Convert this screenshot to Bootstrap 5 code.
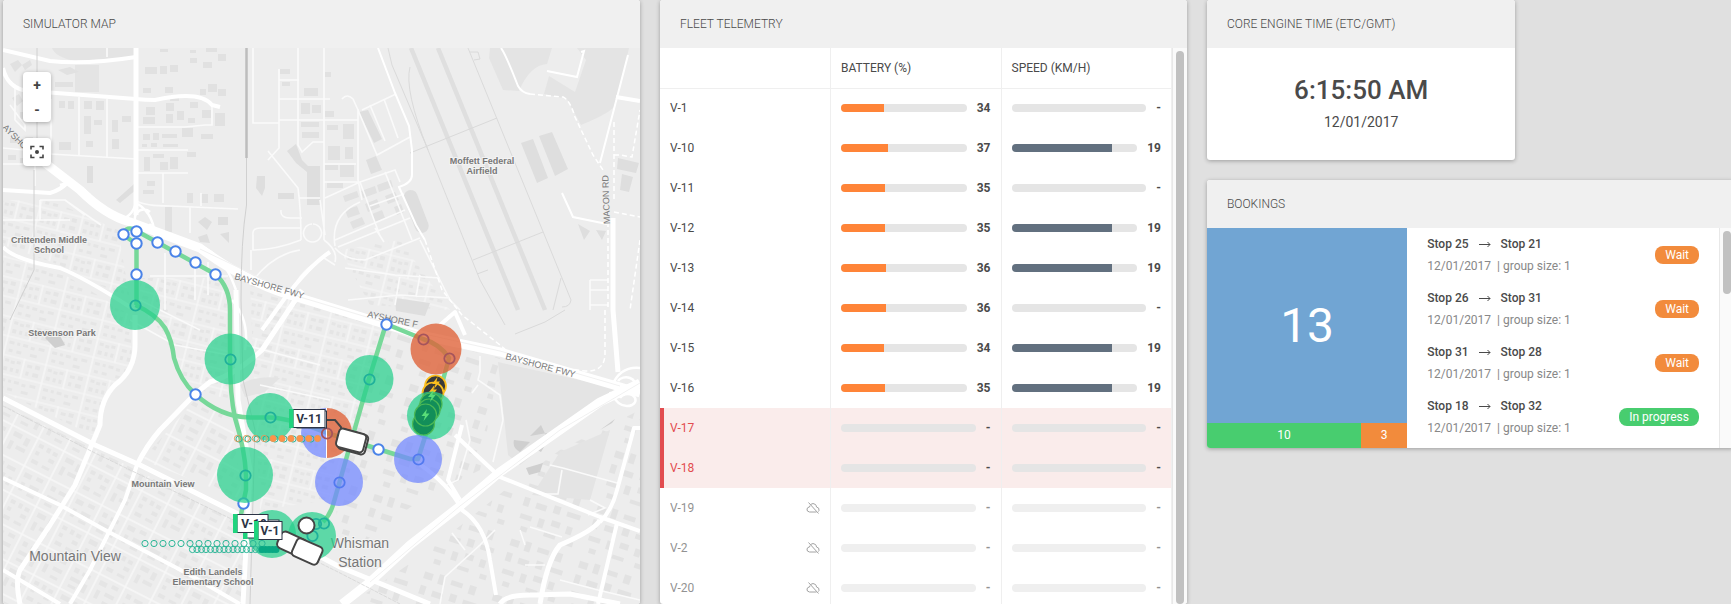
<!DOCTYPE html>
<html lang="en">
<head>
<meta charset="utf-8">
<meta name="viewport" content="width=device-width, initial-scale=1">
<title>Fleet simulator</title>
<link href="https://cdn.jsdelivr.net/npm/bootstrap@5.3.0/dist/css/bootstrap.min.css" rel="stylesheet">
<style>
body{background:#e0e0e0;font-family:Roboto,sans-serif;font-size:12px;line-height:20px;color:#4a4a4a;overflow:hidden}
.board{display:grid;grid-template-columns:637fr 527fr 527fr;column-gap:20px;margin-left:3px;margin-right:-3px;height:100vh}
.panel{border:0;border-radius:3px;box-shadow:0 1px 4px rgba(0,0,0,.3);min-width:0;min-height:0;overflow:hidden;color:#4a4a4a}
.panel-title{background:#f0f0f0;height:48px;padding:14px 20px;font-size:12px;font-weight:300;line-height:20px;margin:0;text-transform:uppercase;flex:none}
.map-body{min-height:0;position:relative;background:#ededed}
.map-tools{position:absolute;left:20px;top:24px}
.tool-box{background:#fff;border-radius:4px;box-shadow:0 1px 4px rgba(0,0,0,.3);width:28px;overflow:hidden}
.tool-box button{display:flex;align-items:center;justify-content:center;border:0;background:none;padding:0;width:28px;color:#444;font-weight:700;font-size:14px;height:28px}
.tool-box.zoomers button{height:25px}
.fleet{table-layout:fixed;margin:0;color:#4a4a4a;width:100%}
.fleet th,.fleet td{height:40px;padding:0 10px;border-right:1px solid #efefef;vertical-align:middle}
.fleet th{font-weight:400}
.fleet thead th{border-bottom:1px solid #efefef}
.track{height:8px;border-radius:4px;background:#e5e5e5;overflow:hidden}
.track div{height:8px}
.fill-b{background:#ff8438}
.fill-s{background:#62707f}
.alerted{background:#faeceb}
.alerted th{color:#e24c4f;box-shadow:inset 4px 0 #e24c4f}
.offline th>*,.offline td>*{opacity:.6}
.spaced{gap:10px}
.rail{width:15px;border-left:1px solid #e8e8e8;background:#fafafa;padding:3px 3px 0;flex:none}
.rail div{width:8px;border-radius:4px;background:#c1c1c1}
.side{min-width:0;gap:20px}
.clock-panel{width:58.5%}
.clock-body{height:112px}
.clock{font-size:26px;font-weight:500;line-height:36px}
.clock-date{font-size:14px;line-height:28px}
.summary{width:38%;color:#fff;flex:none}
.total{background:#71a5d3;font-size:48px;height:195px}
.split{height:25px;line-height:25px}
.bg-run{background:#48cd6f}
.bg-wait{background:#f28b3c}
.bookings{height:220px}
.trips{padding-top:5px}
.trip{height:54px;padding:0 20px}
.trip-stops{font-weight:500;line-height:22px}
.trip-info{color:#888;line-height:22px}
.state{color:#fff;border-radius:8px;height:18px;line-height:18px;padding:0 10px;margin-top:13px}
.trip-thumb{height:63px}
.street{font-family:"Liberation Sans",sans-serif;font-size:9px;fill:#777}
.poi{font-family:"Liberation Sans",sans-serif;font-size:9px;font-weight:700;fill:#777;text-anchor:middle;paint-order:stroke;stroke:#f3f3f3;stroke-width:2px}
.town{font-family:"Liberation Sans",sans-serif;font-size:14px;fill:#777;text-anchor:middle;paint-order:stroke;stroke:#f3f3f3;stroke-width:2px}
.tag{font-family:Roboto,sans-serif;font-size:12px;font-weight:700;fill:#2c3445;text-anchor:middle}
</style>
</head>
<body>
<main class="board">
<section class="card panel">
<h2 class="panel-title">Simulator map</h2>
<div class="map-body flex-grow-1">
<svg class="d-block w-100 h-100" viewBox="3 48 637 556" preserveAspectRatio="xMidYMid slice" role="img" aria-label="Vehicle map">
<defs>
<pattern id="sw" width="58" height="62" patternUnits="userSpaceOnUse" patternTransform="rotate(27)">
<path d="M0 1H58M1 0V62M30 0V62M0 32H58" stroke="#f8f8f8" stroke-width="1.4" fill="none"/>
<path d="M5 5h5v4h-5zM14 5h4v5h-4zM21 6h5v4h-5zM5 13h4v4h-4zM20 14h6v4h-6zM5 22h7v4h-7zM17 23h8v3h-8zM35 5h9v5h-9zM48 6h5v8h-5zM35 15h4v9h-4zM43 17h10v4h-10zM5 37h8v5h-8zM18 36h7v4h-7zM6 47h4v9h-4zM15 46h10v4h-10zM16 55h8v3h-8zM35 37h5v5h-5zM44 38h9v4h-9zM35 47h11v4h-11zM50 48h4v9h-4zM36 55h8v3h-8z" fill="#e5e5e5"/></pattern>
<pattern id="homes" width="44" height="38" patternUnits="userSpaceOnUse" patternTransform="rotate(14)">
<path d="M0 1H44M1 0V38M23 0V20M0 20H44" stroke="#f8f8f8" stroke-width="1.2" fill="none"/>
<path d="M4 4h4v3h-4zM10 5h4v3h-4zM16 4h4v3h-4zM4 12h4v4h-4zM11 12h3v4h-3zM17 12h3v4h-3zM27 5h5v3h-5zM35 4h5v4h-5zM27 12h3v4h-3zM34 12h6v4h-6zM4 24h5v3h-5zM12 24h3v3h-3zM18 24h5v3h-5zM5 32h4v3h-4zM13 32h5v3h-5zM26 25h4v3h-4zM34 24h6v3h-6zM27 32h7v3h-7z" fill="#e5e5e5"/></pattern>
<pattern id="se" width="72" height="58" patternUnits="userSpaceOnUse" patternTransform="rotate(18)">
<path d="M5 6h9v7h-9zM20 4h6v10h-6zM33 6h12v5h-12zM52 5h7v9h-7zM5 20h6v9h-6zM18 22h11v6h-11zM36 19h7v8h-7zM50 21h14v5h-14zM6 37h12v5h-12zM25 36h6v9h-6zM38 34h9v6h-9zM54 35h6v8h-6zM10 49h7v5h-7zM34 48h12v4h-12zM58 49h7v5h-7z" fill="#e2e2e2"/></pattern>
<g id="dot"><circle r="5.2" fill="#fff" stroke="#4a83e8" stroke-width="2"/></g>
<circle id="ring" r="5.2" fill="none" stroke="#1fb09b" stroke-width="1.8"/>
<circle id="crumb" r="3.1" fill="none" stroke="#2ab596" stroke-width="1"/>
<path id="bolt" d="M1.5-6L-4 1H-.5L-2 6L4-1.500H.5Z"/>
</defs>
<rect x="3" y="48" width="637" height="556" fill="#ededed"/>
<!-- neighbourhoods -->
<path d="M3 405L95 450L137 470L243 525V604H3Z" fill="url(#sw)"/>
<path d="M3 255L60 272L130 315L132 365L108 395L98 438L3 392Z" fill="url(#homes)"/>
<path d="M3 200H50L118 230L130 300L60 265L3 245Z" fill="url(#homes)"/>
<path d="M140 278H228V400L188 385L160 330L140 310Z" fill="url(#homes)"/>
<path d="M195 400L232 420L243 500L142 460Z" fill="url(#sw)"/>
<path d="M250 285L340 310L385 325L330 500L260 510Z" fill="url(#homes)"/>
<path d="M385 330L500 358L480 470L420 500L340 560L335 490Z" fill="url(#se)"/>
<path d="M505 490L560 450L640 410V604H350L430 550Z" fill="url(#se)"/>
<path d="M340 250L400 240L450 310L370 305Z" fill="url(#homes)"/>
<!-- parks and fields -->
<g fill="#e4e4e4">
<path d="M52 48H136V57L75 61Q55 57 52 48ZM75 65H99V92H75ZM490 48H552L547 64Q530 65 519 91L503 90L489 58ZM577 48H629L616 104Q613 112 581 125L567 99L544 94L549 76L575 92L586 60ZM498 362L616 388L520 465L508 455ZM532 495L590 500L610 430L560 452Z"/>
<path d="M240 385Q255 375 280 378L265 392L245 397Z"/>
</g>
<g fill="#dedede">
<path d="M521 143L533 139L548 178L537 183ZM539 136L552 132L568 169L555 176ZM359 112L368 110L382 139L374 143ZM366 160L376 156L382 170L371 174ZM618 158L639 163L636 173L617 169ZM622 174L633 177L629 192L620 190ZM395 298L430 303L425 316L396 311ZM578 224L590 231L584 240ZM596 230L606 231L602 240Z"/>
<path d="M45 338Q50 328 58 332L65 345L55 348ZM530 442L514 440Q512 448 520 452ZM541 425L530 436L547 433L545 442L532 447L541 452L548 440ZM526 468L543 463L540 472L529 475ZM615 419L600 430L612 423Z" fill="#cfcfcf"/>
<rect x="409" y="189" width="14" height="45" rx="7" transform="rotate(-21 416 211)"/>
<path d="M287 151L296 144L302 160L308 166H320V205H307V172L296 163ZM257 176H265V188L262 196L256 188ZM278 193H294V199H278ZM198 222L205 217L212 222L207 230ZM218 217H228V225H218ZM198 237L207 234L210 243L200 242ZM220 234L229 232V243ZM87 166H93V183H87ZM116 200L134 184L137 189L120 203Z"/>
</g>
<!-- industrial blocks north of the freeway -->
<g fill="#e1e1e1">
<path d="M145 67h12v7h-12zM160 66h7v8h-7zM170 65h8v7h-8zM190 58h7v5h-7zM203 62h9v6h-9zM218 54h8v7h-8zM190 50h6v3h-6zM160 49h8v3h-8zM206 48h11v4h-11zM143 88h8v5h-8zM165 87h8v6h-8zM170 95h9v6h-9zM200 89h6v6h-6zM208 84h9v8h-9zM218 89h8v7h-8zM146 107h9v8h-9zM143 117h12v7h-12zM166 103h8v8h-8zM166 114h7v9h-7zM177 111h7v9h-7zM190 102h8v6h-8zM202 110h9v8h-9zM188 118h7v5h-7zM215 113h10v13h-10zM143 134h7v6h-7zM153 133h6v7h-6zM162 134h15v4h-15zM182 128h11v9h-11zM201 134h12v5h-12zM142 144h5v3h-5zM151 143h6v4h-6zM163 144h15v3h-15zM144 157h6v14h-6zM153 154h11v4h-11zM160 162h8v8h-8zM170 157h8v12h-8zM187 152h9v5h-9zM143 190h11v4h-11zM147 181h8v5h-8zM187 193h6v10h-6zM201 194h7v9h-7zM214 194h10v8h-10zM165 207h7v25h-7z"/>
<path d="M58 70l12-3l9 5l-12 3zM55 82h18v5h-18zM59 101h6v7h-6zM68 101h6v8h-6zM84 101h8v8h-8zM96 101h8v9h-8zM84 116h7v18h-7zM94 120h8v5h-8zM112 120h6v12h-6zM122 116h9v6h-9zM59 142h12v8h-12zM86 141h7v6h-7zM112 139h7v10h-7zM10 64l8-4l4 5l-7 7zM22 65l8-5l2 5l-7 5zM12 98l7-4l4 7l-6 5zM20 112h8v7h-8zM10 138h8v5h-8zM25 137h8v8h-8zM8 155h8v5h-8zM20 158h9v5h-9z"/>
<path d="M280 69h10v5h-10zM282 82h8v4h-8zM301 103h9v11h-9zM312 105h9v8h-9zM304 88h14v8h-14zM301 122h18v5h-18zM302 132h17v6h-17zM325 111h9v6h-9zM327 125h11v5h-11zM343 124h11v15h-11zM328 146h12v14h-12zM345 147h8v12h-8zM325 165h13v5h-13zM340 165h14v12h-14zM325 72h6v5h-6zM327 183h16v5h-16z"/>
<path d="M343 196l14-5l2 6l-14 5zM361 191l14-5l2 7l-14 5zM377 185l14-5l2 7l-14 5zM345 210l12-4l3 8l-12 4zM365 204l12-5l3 8l-12 5zM385 196l10-4l4 8l-11 4zM350 222l12-5l3 7l-12 5zM372 214l10-4l3 8l-10 4zM394 207l7-3l3 8l-7 3z"/>
</g>
<!-- airfield -->
<g fill="none" stroke="#dfdfdf" stroke-width="4.500"><path d="M411 48L518 310M438 48L545 310"/></g>
<g fill="none" stroke="#dadada" stroke-width="1"><path d="M388 48L392 65L426 145L480 280L505 325M468 48L571 300Q570 307 562 307M410 153L497 118M473 260L543 232M410 67Q404 90 428 150M553 310L561 278M477 274L488 270M515 334L545 322L565 310M470 52h8l2 7l-6 1"/></g>
<!-- local streets -->
<g fill="none" stroke="#fafafa" stroke-width="1.600">
<path d="M79 97V155M107 48V57M107 99V157M50 154L137 159M51 99V154M137 127H185L205 125H212V106M137 150H188M137 173H188M163 173V203M137 201Q145 206 170 206L238 209M190 207V233M201 193V206M253 48V123H279M279 69V148L268 160M279 80H299M279 99H330M279 120H358M298 48V145L302 152L313 142H324M324 48V240M324 164H356M324 182H360M358 109V180L362 200M299 198H320M268 151L298 188Q301 210 301 240M281 210Q280 218 290 218H302M362 110L396 94M358 110L377 155L410 137M370 105L385 141M384 99L398 138M325 198L360 182L395 170L400 182M360 182L380 236M385 172L412 240M370 206L404 194M335 246Q330 215 360 202M335 240L405 210M338 247L410 218M375 228L384 242M335 248Q345 260 365 260L420 238M342 99Q347 93 353 99L358 110M320 200L325 235"/>
<path d="M301 240Q275 250 253 250V235Q252 228 260 228H301M251 270V250M313 224A9 9 0 1 1 312 224M300 250Q270 255 250 285M293 290Q300 270 324 258L335 265M324 240Q338 250 335 262M420 240L440 280L450 300L460 310M345 268L395 275L440 278M400 275L395 305M420 275L416 297M348 300L400 295L450 298M590 280V310M590 280H608M590 290H608M590 305H608"/>
<path d="M3 164H35V186M40 200V220M40 200H65L101 225M3 220H70M65 200L85 215M3 75L15 85V120L25 130V125L10 105M3 148L25 150M150 276H228M165 253V310M195 264V300M140 300L200 330M208 262V295M130 320L175 345L228 355M245 345L320 365M260 385L330 400"/>
<path d="M480 356V372L478 380L500 395L503 420L493 462M466 420L470 440L458 480L447 485M478 385L472 393M550 465L563 468L617 483M562 470L558 494L540 494M530 527L562 537M525 565H545M560 580L598 590L640 600M440 604L445 577L480 545L495 530M452 533L465 550M520 530L525 545M590 500L605 508L588 515"/>
</g>
<g fill="none" stroke="#fff" stroke-width="2">
<path d="M378 48L395 93L409 126L412 150V175Q412 183 399 187L416 225L425 240M501 48Q506 55 518 86Q522 93 530 94M547 71L577 77L584 51L581 52M562 193L573 217L607 224M628 55L600 163"/>
<path d="M530 94L563 97Q570 100 575 117L593 155L603 170M614 122V200M614 155L620 155L632 157L640 110M608 222V310M614 212L640 217M640 240L630 310M425 240L442 290L462 315L500 345L520 362M605 310V355Q604 372 585 371L555 367" stroke-dasharray="5 3" stroke-width="1.500"/>
</g>
<!-- main roads -->
<g fill="none" stroke="#fff" stroke-linejoin="round" stroke-linecap="butt">
<g stroke-width="4">
<path d="M3 50L50 61Q85 65 136 57M3 68Q8 90 30 91L136 99Q145 100 155 100Q200 90 212 105L220 107M3 190L50 193Q60 190 66 184"/>
<path d="M3 247Q15 260 60 268Q85 278 130 307M616 97L640 101M262 330L285 298Q310 265 330 252M440 325L455 312L465 335"/>
<path d="M3 478L60 505L105 530L190 575L240 604M137 465L125 500L90 570L70 604M3 570L60 604"/>
<path d="M462 425L448 480L460 500M455 435L500 477L600 517L640 531M418 463Q450 485 462 510Q485 525 490 560L496 595M640 428H634L617 490Q612 510 600 522M617 523L598 604"/>
</g>
<g stroke-width="5">
<path d="M136 48V215M135 315V345Q135 370 115 385Q100 400 100 425L75 485L50 525L20 570Q15 580 20 604"/>
<path d="M302 290L262 350Q235 375 210 382L195 394L160 430Q147 445 137 465"/>
<path d="M3 398L95 445L140 465L260 525L340 567L430 604M236 290L238 400L250 470L243 604M613 218V310L618 372M600 520Q595 530 560 545Q547 560 540 604M500 604Q505 595 530 595L570 594L620 604"/>
</g>
<path d="M45 163L80 190Q105 215 130 222L200 248Q250 285 300 298L420 335L500 352L610 384L640 393" stroke-width="9"/>
<path d="M640 383L600 402L560 430L500 472L460 506L410 545L370 582L342 604" stroke-width="9"/>
<path d="M136 200Q135 215 120 220M138 204Q155 215 155 240M150 212A9 9 0 1 0 151 224M60 185Q75 180 90 195M205 248Q225 258 236 290M612 386Q620 366 640 368M618 381A8 6 0 1 1 634 387M610 392Q620 410 632 405A8 6 0 1 0 620 398M232 300Q250 320 245 350" stroke-width="2.500"/>
</g>
<g fill="none"><path d="M200 249L300 297L420 333L500 351L620 386M640 383L560 430L460 506L370 582" stroke="#f1f1f1" stroke-width="1"/>
<path d="M3 406L95 453L250 528L340 573L400 604" stroke="#d4d4d4" stroke-width=".8" stroke-dasharray="4 1"/>
<path d="M246.500 48V158" stroke="#bdbdbd" stroke-width="2.500"/><path d="M246.500 158V205Q241 240 241 300L243 380L255 430L250 604M34 170V270L10 320M37 48V140" stroke="#d0d0d0" stroke-width="1"/></g>
<!-- place names -->
<g class="street"><text transform="translate(2 128) rotate(45)">AYSHO</text><text transform="translate(234 279) rotate(16)">BAYSHORE FWY</text><text transform="translate(367 317) rotate(12)">AYSHORE F</text><text transform="translate(505 359) rotate(15)">BAYSHORE FWY</text><text transform="translate(610 224) rotate(-92)">MACON RD</text></g>
<g class="poi"><text x="482" y="164">Moffett Federal</text><text x="482" y="174">Airfield</text><text x="49" y="243">Crittenden Middle</text><text x="49" y="253">School</text><text x="62" y="336">Stevenson Park</text><text x="163" y="487">Mountain View</text><text x="213" y="575">Edith Landels</text><text x="213" y="585">Elementary School</text></g>
<g class="town"><text x="75" y="561">Mountain View</text><text x="360" y="548">Whisman</text><text x="360" y="567">Station</text></g>
<!-- route -->
<g fill="none" stroke="#77d899" stroke-width="4.500" stroke-linejoin="round">
<path d="M136.500 305V244L123.500 235Q125 227 133 229L215 274Q230 287 230 310V359Q230 395 235 418Q245 450 246 475V490L243 504L240 520"/>
<path d="M135.500 305Q157 315 165 328Q172 340 174 358Q180 380 195 394Q220 417 250 417.500H270Q290 418 327 433L378 449L410 459H418L443 380L449 358Q440 344 423 339L386 324L369 379L333 505Q330 515 323 522"/>
</g>
<g><use href="#dot" x="136.500" y="231.500"/><use href="#dot" x="123.500" y="234.500"/><use href="#dot" x="136.500" y="243.500"/><use href="#dot" x="157.500" y="242.500"/><use href="#dot" x="175.500" y="251.500"/><use href="#dot" x="195.500" y="262.500"/><use href="#dot" x="215.500" y="274.500"/><use href="#dot" x="136.500" y="274.500"/><use href="#dot" x="195.500" y="394.500"/><use href="#dot" x="386.500" y="324.500"/><use href="#dot" x="378.500" y="449.500"/><use href="#dot" x="243.500" y="503.500"/></g>
<!-- chargers -->
<g fill="#3a3a3a" stroke="#fcbf1e" stroke-width="1.700"><circle cx="435.500" cy="386" r="10.500"/><circle cx="433" cy="393" r="10.500"/></g>
<g fill="#fcbf1e"><use href="#bolt" x="436" y="383"/><use href="#bolt" x="433" y="391"/></g>
<!-- demand areas -->
<g fill="#26d08c" fill-opacity=".72"><circle cx="135" cy="305" r="25"/><circle cx="230" cy="359" r="25.500"/><circle cx="270" cy="417" r="24"/><circle cx="245" cy="475" r="28"/><circle cx="369.500" cy="379" r="24"/><circle cx="431" cy="415.500" r="24"/><circle cx="272" cy="534" r="24"/><circle cx="312" cy="536" r="24"/></g>
<g fill="#7388ff" fill-opacity=".74"><circle cx="418" cy="459" r="24"/><circle cx="339" cy="482" r="24"/><path d="M326 408A25 25 0 0 0 326 458Z"/></g>
<g fill="#df6036" fill-opacity=".78"><circle cx="436" cy="349" r="25.500"/><path d="M327 408A25 25 0 0 1 327 458Z"/></g>
<path d="M326.500 408V458" stroke="#fff"/>
<g fill="#128e59" stroke="#4cb956" stroke-width="1.200"><circle cx="431" cy="404" r="11"/><circle cx="429" cy="410" r="11"/><circle cx="423.500" cy="424" r="11"/><circle cx="425.500" cy="415" r="11"/></g>
<g fill="#59dd78"><use href="#bolt" x="432" y="396"/><use href="#bolt" x="425.500" y="415"/></g>
<g><use href="#ring" x="135.500" y="305.500"/><use href="#ring" x="230.500" y="359.500"/><use href="#ring" x="270.500" y="417.500"/><use href="#ring" x="245.500" y="475.500"/><use href="#ring" x="369.500" y="379.500"/><use href="#ring" x="324" y="523.500"/><use href="#ring" x="316" y="524"/><use href="#ring" x="312.500" y="536"/></g>
<g fill="none" stroke="#5279f0" stroke-width="1.800"><circle cx="418.500" cy="459.500" r="5.200"/><circle cx="339.500" cy="482.500" r="5.200"/></g>
<g fill="none" stroke="#a5545c" stroke-width="1.800"><circle cx="423.500" cy="339.500" r="5.200"/><circle cx="449.500" cy="358.500" r="5.200"/><circle cx="327" cy="433.500" r="5.200"/></g>
<!-- breadcrumb trails -->
<g id="trails"></g>
<!-- vehicles -->
<g fill="#fff" stroke="#444" stroke-width="2">
<path d="M325 420H335L341 427V434" fill="none"/>
<rect x="339" y="432" width="28" height="20" rx="4" transform="rotate(15 353 442)"/><rect x="337" y="431" width="28" height="19" rx="4" transform="rotate(15 351 441)"/>
<rect x="278" y="535" width="28" height="18" rx="5" transform="rotate(25 292 544)"/><rect x="293" y="542" width="28" height="19" rx="4" transform="rotate(24 307 552)"/>
<circle cx="306.500" cy="525.500" r="8"/></g>
<g fill="#fff" stroke="#2c3445"><rect x="297" y="411" width="29.500" height="17"/><rect x="293" y="409.500" width="32" height="18"/><rect x="246" y="520" width="33" height="18"/><rect x="237" y="514.500" width="31" height="18"/></g>
<text class="tag" x="254" y="527.500">V-19</text>
<rect x="258" y="521.500" width="24" height="18" fill="#fff" stroke="#2c3445"/>
<g fill="#20d47e"><rect x="289" y="409" width="4.500" height="19"/><rect x="233" y="514" width="4.500" height="19"/><rect x="243" y="533" width="4.500" height="6"/><rect x="254" y="521" width="4.500" height="19"/></g>
<text class="tag" x="309" y="422.500">V-11</text><text class="tag" x="270" y="534.500">V-1</text>
</svg>
<div class="map-tools d-flex flex-column gap-3">
<div class="tool-box zoomers"><button type="button" aria-label="Zoom in">+</button><button type="button" aria-label="Zoom out">-</button></div>
<div class="tool-box"><button type="button" aria-label="Centre map"><svg width="14" height="14" viewBox="0 0 14 14" fill="none" stroke="#444" stroke-width="1.600"><path d="M1 4.500V1.500H4.500M9.500 1.500H13V4.500M13 9.500V12.500H9.500M4.500 12.500H1V9.500"/><circle cx="7" cy="7" r="2" fill="#444" stroke="none"/></svg></button></div>
</div>
</div>
</section>

<section class="card panel">
<h2 class="panel-title">Fleet telemetry</h2>
<div class="d-flex flex-grow-1 overflow-hidden">
<div class="flex-grow-1"><table class="fleet">
<thead><tr><th scope="col" aria-label="Vehicle"></th><th scope="col">BATTERY (%)</th><th scope="col">SPEED (KM/H)</th></tr></thead>
<tbody id="fleet-rows"></tbody></table></div>
<div class="rail"><div class="h-100"></div></div>
</div>
</section>

<div class="side d-flex flex-column">
<section class="card panel clock-panel flex-shrink-0">
<h2 class="panel-title">Core engine time (Etc/GMT)</h2>
<div class="clock-body text-center py-4"><div class="clock">6:15:50 AM</div><div class="clock-date">12/01/2017</div></div>
</section>
<section class="card panel flex-shrink-0">
<h2 class="panel-title">Bookings</h2>
<div class="d-flex bookings">
<div class="summary"><div class="total d-flex align-items-center justify-content-center">13</div>
<div class="split d-flex text-center"><div class="bg-run" style="flex:10">10</div><div class="bg-wait" style="flex:3">3</div></div></div>
<div class="trips flex-grow-1 overflow-hidden" id="trips"></div>
<div class="rail"><div class="trip-thumb"></div></div>
</div>
</section>
</div>
</main>
<script src="https://cdn.jsdelivr.net/npm/bootstrap@5.3.0/dist/js/bootstrap.bundle.min.js"></script>
<script>
const fleet=[['V-1',34,0],['V-10',37,19],['V-11',35,0],['V-12',35,19],['V-13',36,19],['V-14',36,0],['V-15',34,19],['V-16',35,19],['V-17',0,0,'alerted'],['V-18',0,0,'alerted'],['V-19',0,0,'offline'],['V-2',0,0,'offline'],['V-20',0,0,'offline']];
const cloud='<svg width="14" height="12" viewBox="0 0 14 12" fill="none" stroke="#666"><path d="M4.500 2.500Q7 .5 9.500 2.500Q10.500 4 10.500 5Q13.500 5.500 13 8.500L12.500 9.500M10.500 10H3.500Q.5 9.500 1 7Q1.500 5 3.500 5L4 3.500M2.500 .5L12.500 11.500"/></svg>';
const meter=(v,max,c)=>`<td><div class="spaced d-flex align-items-center"><div class="track flex-grow-1"><div class="${c}" style="width:${v/max*100}%"></div></div><strong>${v||'-'}</strong></div></td>`;
document.getElementById('fleet-rows').innerHTML=fleet.map(([n,b,s,k=''])=>`<tr class="${k}"><th scope="row"><div class="d-flex justify-content-between align-items-center"><span>${n}</span>${k==='offline'?cloud:''}</div></th>${meter(b,100,'fill-b')}${meter(s,23.75,'fill-s')}</tr>`).join('');
const arrow='<svg width="12" height="8" viewBox="0 0 12 8" fill="none" stroke="#4a4a4a"><path d="M0 4.500H11M8.500 2L11 4.500L8.500 7"/></svg>';
document.getElementById('trips').innerHTML=[[25,21,0],[26,31,0],[31,28,0],[18,32,1]].map(([a,b,p])=>`<div class="trip d-flex justify-content-between"><div><div class="trip-stops spaced d-flex align-items-center"><span>Stop ${a}</span>${arrow}<span>Stop ${b}</span></div><div class="trip-info">12/01/2017 &nbsp;| group size: 1</div></div><span class="state ${p?'bg-run':'bg-wait'}">${p?'In progress':'Wait'}</span></div>`).join('');
let t='';
for(let i=0;i<9;i++)t+=`<use href="#crumb" x="${239+i*9}" y="439"/>`;
for(let i=0;i<10;i++)t+=`<circle cx="${237.5+i*8.9}" cy="438.500" r="3.100" stroke="#e39a5a" fill="${i<4?'none':'#ff9248'}"/>`;
for(let i=0;i<14;i++)t+=`<use href="#crumb" x="${145+i*9}" y="543.500"/>`;
for(let i=0;i<16;i++)t+=`<use href="#crumb" x="${192.5+i*4.5}" y="549.500"/>`;
for(let i=0;i<5;i++)t+=`<circle cx="${262+i*3.5}" cy="549.500" r="3.500" fill="#08a883"/>`;
document.getElementById('trails').innerHTML=t;
</script>
</body>
</html>
